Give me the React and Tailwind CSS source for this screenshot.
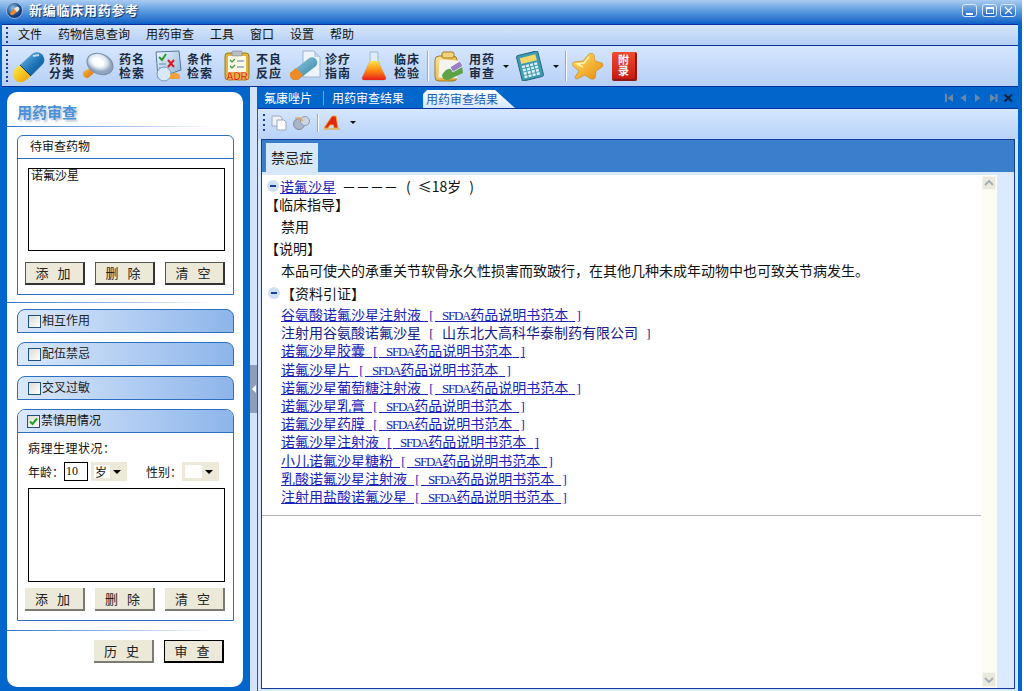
import React from "react";

const Grip = ({ h = 30 }) => (
  <div className="flex flex-col justify-between w-[2px]" style={{ height: h }}>
    {Array.from({ length: Math.floor(h / 4) }).map((_, i) => (
      <span key={i} className="block w-[2px] h-[2px] bg-[#1c3f9c]" />
    ))}
  </div>
);

const Capsule = () => (
  <svg width="34" height="34" viewBox="0 0 34 34">
    <defs>
      <linearGradient id="c1" x1="0" y1="0" x2="1" y2="1"><stop offset="0" stopColor="#7cc0e6" /><stop offset=".55" stopColor="#1d74b8" /><stop offset="1" stopColor="#0b4a86" /></linearGradient>
      <linearGradient id="c2" x1="0" y1="0" x2="1" y2="1"><stop offset="0" stopColor="#fff04a" /><stop offset="1" stopColor="#e89a00" /></linearGradient>
    </defs>
    <path d="M8 16 L20 5 A7.5 7.5 0 0 1 31 15 L19 27 Z" fill="url(#c1)" />
    <path d="M8 16 L19 27 L14 31 A7.5 7.5 0 0 1 3 20 Z" fill="url(#c2)" />
    <path d="M21 7 L27 6" stroke="#fff" strokeWidth="2" opacity=".7" />
    <path d="M8 16 L19 27" stroke="#0a3a66" strokeWidth="1" />
  </svg>
);
const Magnifier = () => (
  <svg width="32" height="30" viewBox="0 0 32 30">
    <defs>
      <radialGradient id="m1" cx=".4" cy=".4"><stop offset="0" stopColor="#ffffff" /><stop offset=".65" stopColor="#dfe8f2" /><stop offset="1" stopColor="#8ea5bf" /></radialGradient>
      <linearGradient id="m2" x1="0" y1="0" x2="1" y2="1"><stop offset="0" stopColor="#ffc04a" /><stop offset="1" stopColor="#d76a00" /></linearGradient>
    </defs>
    <path d="M1 21 L8 17 L12 22 L6 27 Q0 27 1 21Z" fill="url(#m2)" />
    <ellipse cx="18" cy="13" rx="13.5" ry="10" transform="rotate(25 18 13)" fill="url(#m1)" stroke="#7d93ac" strokeWidth="1.2" />
    <ellipse cx="16" cy="11" rx="7" ry="4.5" transform="rotate(25 16 11)" fill="#fff" opacity=".8" />
  </svg>
);
const Condition = () => (
  <svg width="30" height="32" viewBox="0 0 30 32">
    <defs><linearGradient id="f1" x1="0" y1="0" x2="1" y2="1"><stop offset="0" stopColor="#eef6ff" /><stop offset="1" stopColor="#8fb4da" /></linearGradient></defs>
    <path d="M3 2 L26 1 L28 20 L5 28 Z" fill="url(#f1)" stroke="#55789e" />
    <path d="M6 7 L9 10 L13 4" stroke="#2a9a30" strokeWidth="2" fill="none" />
    <path d="M15 10 L21 17 M21 10 L15 17" stroke="#d52020" strokeWidth="2" />
    <path d="M6 14h7M6 18h6" stroke="#6688aa" />
    <ellipse cx="11" cy="24" rx="7" ry="7" fill="#d9e9f7" stroke="#7a9cc0" />
    <path d="M17 25 Q22 20 27 25 L27 29 L17 29Z" fill="#f2a23a" />
  </svg>
);
const Adr = () => (
  <svg width="28" height="32" viewBox="0 0 28 32">
    <rect x="2" y="3" width="24" height="27" rx="3" fill="#e0b53c" stroke="#9b7a20" />
    <rect x="5" y="6" width="18" height="16" fill="#fdfbe8" />
    <rect x="9" y="1" width="10" height="5" rx="1" fill="#b9bfc6" stroke="#777" strokeWidth=".5" />
    <path d="M7 10l2 2 3-3M7 16l2 2 3-3" stroke="#2f9a3a" strokeWidth="1.2" fill="none" />
    <path d="M14 11h7M14 17h7" stroke="#5577bb" />
    <text x="14" y="29.5" textAnchor="middle" fontSize="10" fontWeight="700" fontFamily="Liberation Sans" fill="#e01818" stroke="#fff2b0" strokeWidth=".25">ADR</text>
  </svg>
);
const Guide = () => (
  <svg width="33" height="32" viewBox="0 0 33 32">
    <defs><linearGradient id="g1" x1="0" y1="0" x2="1" y2="1"><stop offset="0" stopColor="#9ad0e8" /><stop offset="1" stopColor="#2c7f9f" /></linearGradient></defs>
    <path d="M15 1 L26 1 L32 7 L32 27 L15 27Z" fill="#eef4fb" stroke="#9db4cc" />
    <path d="M26 1 L26 7 L32 7Z" fill="#bcd0e6" />
    <path d="M2 23 L20 9 A5 5 0 0 1 28 16 L10 30 Q1 31 2 23Z" fill="url(#g1)" />
    <path d="M2 23 L10 30 Q1 31 2 23 M2 23 L8 18 L15 25 L10 30Z" fill="#f08a24" />
  </svg>
);
const Flask = () => (
  <svg width="26" height="30" viewBox="0 0 26 30">
    <defs><linearGradient id="fl" x1="0" y1="0" x2="0" y2="1"><stop offset="0" stopColor="#ffe24a" /><stop offset=".5" stopColor="#ff8a10" /><stop offset="1" stopColor="#e8201a" /></linearGradient></defs>
    <path d="M9 1 L17 1 L17 10 L25 27 Q25 29 23 29 L3 29 Q1 29 1 27 L9 10Z" fill="#dcecf8" stroke="#8aa6c0" strokeWidth=".7" />
    <path d="M9 10 L17 10 L25 27 Q25 29 23 29 L3 29 Q1 29 1 27Z" fill="url(#fl)" />
  </svg>
);
const Clip = () => (
  <svg width="30" height="31" viewBox="0 0 30 31">
    <defs><linearGradient id="cl" x1="0" y1="0" x2="1" y2="1"><stop offset="0" stopColor="#ffe79a" /><stop offset="1" stopColor="#d39a24" /></linearGradient></defs>
    <rect x="1" y="5" width="22" height="25" rx="4" fill="url(#cl)" stroke="#a57a1c" />
    <rect x="8" y="1" width="12" height="6" rx="2" fill="#f2d27a" stroke="#a57a1c" />
    <rect x="5" y="9" width="19" height="18" fill="#f4f4ee" transform="rotate(3 14 18)" />
    <path d="M8 24 Q14 14 20 20 L28 14 L29 22 L14 29 Q8 29 8 24Z" fill="#5ea34a" />
    <path d="M16 16 L26 10 L29 15 L19 21Z" fill="#9a80c8" stroke="#fff" strokeWidth=".7" />
  </svg>
);
const Calc = () => (
  <svg width="31" height="30" viewBox="0 0 31 30">
    <g transform="rotate(-14 15 15)">
      <rect x="4" y="2" width="22" height="26" rx="2" fill="#3f9bb5" stroke="#24697f" />
      <rect x="7" y="5" width="16" height="6" fill="#f5d66a" />
      <g fill="#e2f2f6">
        {[0, 1, 2, 3].map((r) => [0, 1, 2, 3].map((c) => <rect key={`${r}${c}`} x={7 + c * 4.2} y={13 + r * 3.4} width="3" height="2.4" />))}
      </g>
    </g>
  </svg>
);
const Star = () => (
  <svg width="33" height="29" viewBox="0 0 33 29">
    <defs><linearGradient id="st" x1="0" y1="0" x2="1" y2="1"><stop offset="0" stopColor="#ffe26a" /><stop offset="1" stopColor="#e88a08" /></linearGradient></defs>
    <path d="M20 1.5 Q22 1 23 3 L24 9 L31 11 Q33 13 31 15 L25 19 L24 26 Q22 28 20 27 L14 23 L6 27 Q4 27 4 25 L8 19 L2 14 Q0 11 3 10 L12 9 L17 3 Q18 1.5 20 1.5Z" fill="url(#st)" stroke="#c77d10" strokeWidth=".6" />
    <path d="M18 5 L13 11 L6 12 L12 15" stroke="#fff3b0" strokeWidth="1.4" fill="none" />
  </svg>
);
const Book = () => (
  <div className="w-[25px] h-[29px] bg-gradient-to-b from-[#f04a30] to-[#c81810] border-r-2 border-b-2 border-[#8a1a14] rounded-[2px] flex flex-col items-center justify-center text-white text-[11px] leading-[11px] font-bold">
    <span>附</span><span>录</span>
  </div>
);
const Logo = () => (
  <svg width="17" height="17" viewBox="0 0 17 17" className="mb-[3px]">
    <defs><radialGradient id="lg" cx=".4" cy=".35"><stop offset="0" stopColor="#8fc2ea" /><stop offset="1" stopColor="#123f80" /></radialGradient></defs>
    <circle cx="8.5" cy="8.5" r="8" fill="url(#lg)" stroke="#dce9f6" strokeWidth=".6" />
    <path d="M4 11 L10 5 A2.2 2.2 0 0 1 13 8 L7 13 A2.2 2.2 0 0 1 4 11Z" fill="#f08a24" />
    <path d="M8 7 L10 5 A2.2 2.2 0 0 1 13 8 L11 10Z" fill="#e8e8e8" />
  </svg>
);

const TLabel = ({ a, b, ml }) => (
  <div className={`flex flex-col text-[12px] leading-[14px] font-bold tracking-[1px] text-[#1a2a40] w-[26px] ${ml}`}>
    <span>{a}</span><span>{b}</span>
  </div>
);
const Caret = ({ ml }) => <span className={`block w-0 h-0 border-x-[3px] border-x-transparent border-t-[3px] border-t-[#111] ${ml}`} />;
const Sep = ({ ml, h = "h-[30px]" }) => <span className={`block w-[1px] ${h} bg-[#8ea9cf] border-r border-white box-content ${ml}`} />;

const WinBtn = ({ children, cls = "w-[15px]" }) => (
  <div className={`${cls} h-[13px] rounded-[3px] border border-[#dbe9fa] bg-gradient-to-b from-[#7fb0e6] to-[#1a69c8] flex items-center justify-center`}>{children}</div>
);

const Btn = ({ t, v = "a", w = "w-[60px]" }) => {
  const cls =
    v === "a"
      ? "border border-[#333] border-b-2 border-r-2 border-t-[#555] border-l-[#555]"
      : v === "b"
      ? "border-r-2 border-b-2 border-[#7b7b74]"
      : "border border-black border-b-2 border-r-2";
  return (
    <div className={`${w} h-[23px] bg-[#ece9d8] ${cls} flex items-center justify-center text-[13px] tracking-[3px] text-[#222]`}>{t}</div>
  );
};

const Check = ({ on }) => (
  <span className="w-[13px] h-[13px] border border-[#1c5180] bg-gradient-to-br from-[#dcdcd6] to-white flex items-center justify-center shrink-0">
    {on && (
      <svg width="9" height="9" viewBox="0 0 9 9"><path d="M1 4.5 L3.5 7 L8 1.5" stroke="#21a121" strokeWidth="2" fill="none" /></svg>
    )}
  </span>
);

const Collapsed = ({ t, cls }) => (
  <div className={`w-[217px] h-[24px] rounded-t-[8px] border border-[#2a6fc0] bg-gradient-to-r from-[#dbe8fa] to-[#8db5ea] flex items-center pl-[10px] gap-[1px] text-[12px] text-[#222] ml-[10px] ${cls}`}>
    <Check />
    <span className="mb-[2px]">{t}</span>
  </div>
);

const Selectish = ({ w, t }) => (
  <div className={`${w} h-[19px] border-[3px] border-[#ece9d8] bg-white flex items-center justify-between text-[12px]`}>
    <span className="pl-[1px] leading-[13px]">{t}</span>
    <span className="w-[14px] h-full bg-[#ece9d8] flex items-center justify-center">
      <span className="block w-0 h-0 border-x-[4px] border-x-transparent border-t-[4px] border-t-black" />
    </span>
  </div>
);

const Minus = () => (
  <span className="w-[12px] h-[12px] rounded-full bg-[#cfe0f4] flex items-center justify-center shrink-0">
    <span className="block w-[6px] h-[2px] bg-[#1a3e9a]" />
  </span>
);

/* half-width latin run: 7px per character, as the reference's 14px CJK UI font */
const L = ({ children }) => (
  <span className="font-['Liberation_Serif',serif] text-[13px] tracking-[-1.25px] [word-spacing:5px] whitespace-pre">{children}</span>
);
const B = ({ children }) => <span className="font-['Liberation_Serif',serif] text-[13px] px-[1.3px]">{children}</span>;

const links = [
  "谷氨酸诺氟沙星注射液",
  null,
  "诺氟沙星胶囊",
  "诺氟沙星片",
  "诺氟沙星葡萄糖注射液",
  "诺氟沙星乳膏",
  "诺氟沙星药膜",
  "诺氟沙星注射液",
  "小儿诺氟沙星糖粉",
  "乳酸诺氟沙星注射液",
  "注射用盐酸诺氟沙星",
];

const Nav = () => (
  <svg width="70" height="10" viewBox="0 0 70 10" className="mr-[4px]">
    <g fill="#6d87a8">
      <path d="M1 1h2v8H1zM9 1v8L3.5 5z" />
      <path d="M22 1v8L16.5 5z" />
      <path d="M31 1v8L36.5 5z" />
      <path d="M46 1v8L51.5 5zM51.5 1h2v8h-2z" />
    </g>
    <path d="M60.5 1.5 L68 8.5 M68 1.5 L60.5 8.5" stroke="#10203c" strokeWidth="2" />
  </svg>
);

export default function App() {
  return (
    <div className="w-[1022px] h-[691px] overflow-hidden flex flex-col bg-[#0066cc] font-['Noto_Sans_CJK_SC','Liberation_Sans',sans-serif] text-[#111]">
      {/* title */}
      <div className="h-[24px] shrink-0 bg-gradient-to-b from-[#a9ccf0] via-[#5596de] to-[#0860c6] flex items-center pl-[6px]">
        <Logo />
        <span className="ml-[6px] mb-[4px] text-[13px] font-bold tracking-[0.75px] text-white [text-shadow:1px_1px_1px_#0a2a66]">新编临床用药参考</span>
        <div className="ml-auto mr-[6px] mb-[3px] flex">
          <WinBtn><span className="block w-[7px] h-[2px] bg-white mt-[6px]" /></WinBtn>
          <div className="ml-[5px]"><WinBtn><span className="block w-[8px] h-[7px] border border-white border-t-2" /></WinBtn></div>
          <div className="ml-[3px]">
            <WinBtn cls="w-[16px]">
              <svg width="9" height="9" viewBox="0 0 9 9"><path d="M1 1 L8 8 M8 1 L1 8" stroke="#fff" strokeWidth="1.2" /></svg>
            </WinBtn>
          </div>
        </div>
      </div>
      {/* menu */}
      <div className="h-[20px] shrink-0 border-y border-[#0a2fa0] ml-[2px] mr-[4px] bg-gradient-to-b from-[#d6e6fc] to-[#b4cef4] flex items-center pl-[4px] text-[12px] box-content">
        <Grip h={16} />
        <div className="ml-[10px] mb-[2px] flex gap-[16px]">
          {["文件", "药物信息查询", "用药审查", "工具", "窗口", "设置", "帮助"].map((m) => (
            <span key={m}>{m}</span>
          ))}
        </div>
      </div>
      {/* toolbar */}
      <div className="h-[40px] shrink-0 ml-[2px] mr-[4px] border-b border-[#0a2fa0] bg-gradient-to-b from-[#d6e6fe] to-[#b6d0f6] flex items-center pl-[4px] box-content">
        <Grip h={32} />
        <div className="ml-[4px]"><Capsule /></div>
        <TLabel a="药物" b="分类" ml="ml-[3px]" />
        <div className="ml-[7px]"><Magnifier /></div>
        <TLabel a="药名" b="检索" ml="ml-[5px]" />
        <div className="ml-[8px]"><Condition /></div>
        <TLabel a="条件" b="检索" ml="ml-[4px]" />
        <div className="ml-[10px]"><Adr /></div>
        <TLabel a="不良" b="反应" ml="ml-[5px]" />
        <div className="ml-[6px]"><Guide /></div>
        <TLabel a="诊疗" b="指南" ml="ml-[4px]" />
        <div className="ml-[10px]"><Flask /></div>
        <TLabel a="临床" b="检验" ml="ml-[7px]" />
        <Sep ml="ml-[7px]" />
        <div className="ml-[5px]"><Clip /></div>
        <TLabel a="用药" b="审查" ml="ml-[5px]" />
        <Caret ml="ml-[8px]" />
        <div className="ml-[6px]"><Calc /></div>
        <Caret ml="ml-[7px]" />
        <Sep ml="ml-[6px]" />
        <div className="ml-[4px]"><Star /></div>
        <div className="ml-[8px]"><Book /></div>
      </div>
      {/* body */}
      <div className="flex-1 min-h-0 flex">
        {/* left */}
        <div className="w-[249px] shrink-0 pl-[7px] pt-[5px]">
          <div className="w-[236px] h-[595px] bg-white rounded-[10px] flex flex-col">
            <div className="h-[34px] shrink-0 pl-[10px] flex items-end pb-[5px]">
              <span className="text-[15px] font-bold leading-[18px] text-[#4a90d9] [text-shadow:2px_2px_2px_#b8c6d6]">用药审查</span>
            </div>
            <div className="h-[1px] shrink-0 w-[208px] bg-gradient-to-r from-[#2a72c8] to-white" />
            {/* box 1 */}
            <div className="mt-[8px] ml-[10px] w-[217px] h-[160px] shrink-0 border border-[#2a6fc0] rounded-t-[6px] flex flex-col">
              <div className="h-[23px] shrink-0 border-b border-[#2a6fc0] pl-[12px] pb-[2px] text-[12px] flex items-center">待审查药物</div>
              <div className="ml-[10px] mr-[8px] mt-[9px] h-[83px] border border-black text-[12px] leading-[12px] pl-[2px]">诺氟沙星</div>
              <div className="mt-[11px] ml-[7px] flex gap-[10px]">
                <Btn t="添 加" /><Btn t="删 除" /><Btn t="清 空" />
              </div>
            </div>
            <div className="mt-[7px] h-[1px] w-[208px] shrink-0 bg-gradient-to-r from-[#2a72c8] to-white" />
            <Collapsed t="相互作用" cls="mt-[6px]" />
            <Collapsed t="配伍禁忌" cls="mt-[9px]" />
            <Collapsed t="交叉过敏" cls="mt-[10px]" />
            {/* box 2 */}
            <div className="mt-[9px] ml-[10px] w-[217px] h-[212px] shrink-0 border border-[#2a6fc0] rounded-t-[8px] flex flex-col">
              <div className="h-[23px] shrink-0 rounded-t-[7px] border-b border-[#2a6fc0] bg-gradient-to-r from-[#dbe8fa] to-[#8db5ea] pl-[9px] flex items-center gap-[1px] text-[12px]">
                <Check on /><span className="mb-[2px]">禁慎用情况</span>
              </div>
              <div className="mt-[7px] pl-[10px] text-[12px] leading-[16px] tracking-[0.5px]">病理生理状况：</div>
              <div className="mt-[6px] pl-[10px] flex items-center text-[12px]">
                <span className="w-[36px]">年龄：</span>
                <span className="w-[24px] h-[19px] border border-black leading-[17px] pl-[1px] font-['Liberation_Serif',serif]">10</span>
                <div className="ml-[3px]"><Selectish w="w-[36px]" t="岁" /></div>
                <span className="ml-[19px] w-[36px]">性别：</span>
                <Selectish w="w-[37px]" t="" />
              </div>
              <div className="ml-[10px] mr-[8px] mt-[7px] h-[94px] shrink-0 border border-black" />
              <div className="mt-[6px] ml-[7px] flex gap-[10px]">
                <Btn t="添 加" v="b" /><Btn t="删 除" v="b" /><Btn t="清 空" v="b" />
              </div>
            </div>
            <div className="mt-[9px] h-[1px] w-[208px] shrink-0 bg-gradient-to-r from-[#2a72c8] to-white" />
            <div className="mt-[9px] ml-[87px] flex gap-[10px]">
              <Btn t="历 史" v="b" /><Btn t="审 查" v="c" />
            </div>
          </div>
        </div>
        {/* splitter */}
        <div className="w-[9px] shrink-0 flex">
          <div className="ml-[1px] w-[7px] bg-[#d5e3f8] flex flex-col">
            <div className="mt-[278px] h-[48px] bg-[#8f9eb8] flex items-center justify-center">
              <span className="block w-0 h-0 border-y-[4px] border-y-transparent border-r-[4px] border-r-white" />
            </div>
          </div>
        </div>
        {/* right */}
        <div className="flex-1 min-w-0 mr-[4px] flex flex-col bg-[#d5e6ff]">
          <div className="h-[22px] shrink-0 flex items-center border-b border-[#0a2fa0] bg-[#0066cc] text-[12px] text-white">
            <span className="ml-[6px]">氟康唑片</span>
            <span className="ml-[11px] w-[1px] h-[14px] bg-[#6aa3e0]" />
            <span className="ml-[8px]">用药审查结果</span>
            <div className="ml-[19px] self-end h-[18px] w-[92px] bg-gradient-to-b from-white to-[#d5e6ff] text-[#1a5cb8] pl-[3px] leading-[17px] [clip-path:polygon(0_4px,4px_0,72px_0,100%_100%,0_100%)]">用药审查结果</div>
            <div className="ml-auto"><Nav /></div>
          </div>
          <div className="h-[30px] shrink-0 bg-gradient-to-b from-[#d5e6ff] to-[#b9d3f8] flex items-center pl-[5px] pb-[3px]">
            <Grip h={18} />
            <svg width="16" height="16" viewBox="0 0 16 16" className="ml-[6px]">
              <path d="M1 1h8l2 2v8H1z" fill="#eef2f8" stroke="#9aa8bc" />
              <path d="M6 5h7l2 2v8H6z" fill="#fff" stroke="#9aa8bc" />
            </svg>
            <svg width="19" height="16" viewBox="0 0 19 16" className="ml-[5px]">
              <circle cx="7" cy="9" r="5.5" fill="#aab4c6" stroke="#7d8aa0" />
              <circle cx="13" cy="6" r="4.5" fill="#cdd5e2" stroke="#8f9bb0" />
              <path d="M3 3h5l3 3" stroke="#e8a860" strokeWidth="1.5" fill="none" />
            </svg>
            <Sep ml="ml-[6px]" h="h-[18px]" />
            <svg width="18" height="15" viewBox="0 0 18 15" className="ml-[4px]">
              <path d="M1 13 L9 1 L13 1 L15 13 L11 13 L10.5 10 L7 10 L5 13Z" fill="#e02a10" stroke="#f0b020" strokeWidth=".8" />
              <path d="M1 14h16" stroke="#e8a010" strokeWidth="1" />
            </svg>
            <Caret ml="ml-[9px]" />
          </div>
          {/* frame */}
          <div className="ml-[3px] w-[754px] h-[550px] shrink-0 border border-[#143a9a] flex flex-col bg-[#dde9fc]">
            <div className="h-[32px] shrink-0 bg-[#3a7fcb] flex items-end pl-[4px]">
              <div className="w-[52px] h-[29px] bg-[#d8e8fb] text-[14px] pb-[1px] flex items-center justify-center text-[#222]">禁忌症</div>
            </div>
            <div className="h-[3px] shrink-0 bg-[#d8e8fb]" />
            <div className="flex-1 min-h-0 flex">
              <div className="w-[719px] shrink-0 bg-white text-[14px] flex flex-col text-[#111]">
                <div className="mt-[2px] h-[18px] shrink-0 flex items-center leading-[18px] pl-[5px]">
                  <Minus />
                  <span className="ml-[1px] text-[#1a22b8] underline">诺氟沙星</span>
                  <span className="ml-[6px]">－－－－</span>
                  <span className="ml-[8px]">(</span>
                  <span className="ml-[7px] whitespace-pre">≤18岁</span>
                  <span className="ml-[8px]">)</span>
                </div>
                <div className="h-[18px] shrink-0 pl-[3px] leading-[18px]">【临床指导】</div>
                <div className="mt-[4px] h-[18px] shrink-0 pl-[19px] leading-[18px]">禁用</div>
                <div className="mt-[4px] h-[18px] shrink-0 pl-[3px] leading-[18px]">【说明】</div>
                <div className="mt-[4px] h-[18px] shrink-0 pl-[19px] leading-[18px]">本品可使犬的承重关节软骨永久性损害而致跛行，在其他几种未成年动物中也可致关节病发生。</div>
                <div className="mt-[5px] h-[18px] shrink-0 pl-[6px] flex items-center leading-[18px]">
                  <Minus />
                  <span className="ml-[1px]">【资料引证】</span>
                </div>
                <div className="mt-[3px] pl-[19px] leading-[18.2px] text-[#1a22b8]">
                  {links.map((n, i) =>
                    n ? (
                      <div key={i} className="h-[18.2px] whitespace-pre">
                        <span className="underline">{n}<L> </L><B>[</B><L> SFDA</L>药品说明书范本<L> </L><B>]</B></span>
                      </div>
                    ) : (
                      <div key={i} className="h-[18.2px] whitespace-pre text-[#16208a]">
                        注射用谷氨酸诺氟沙星<L> </L><B>[</B><L> </L>山东北大高科华泰制药有限公司<L> </L><B>]</B>
                      </div>
                    )
                  )}
                </div>
                <div className="mt-[10px] h-[1px] bg-[#b4b4b4]" />
              </div>
              <div className="w-[16px] shrink-0 bg-[#fdfdf3] flex flex-col justify-between py-[1px] pl-[1px]">
                <div className="w-[14px] h-[14px] bg-[#e9e9de] flex items-center justify-center border border-[#f6f6ee]">
                  <svg width="10" height="6" viewBox="0 0 10 6"><path d="M1 5 L5 1 L9 5" stroke="#a8b0b8" strokeWidth="2" fill="none" /></svg>
                </div>
                <div className="w-[14px] h-[15px] bg-[#e9e9de] flex items-center justify-center border border-[#f6f6ee]">
                  <svg width="10" height="6" viewBox="0 0 10 6"><path d="M1 1 L5 5 L9 1" stroke="#a8b0b8" strokeWidth="2" fill="none" /></svg>
                </div>
              </div>
              <div className="flex-1 bg-[#dde9fc]" />
            </div>
          </div>
          <div className="flex-1" />
        </div>
      </div>
    </div>
  );
}
